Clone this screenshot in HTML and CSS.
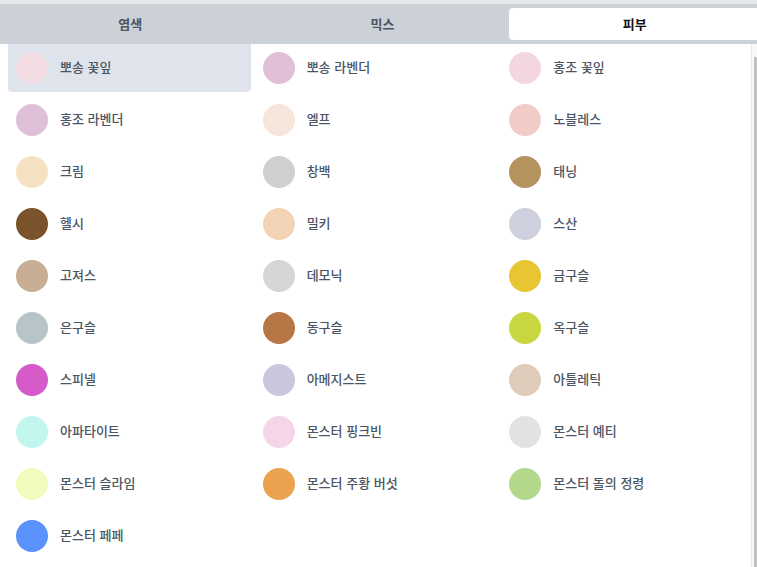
FILE: index.html
```html
<!DOCTYPE html>
<html lang="ko">
<head>
<meta charset="utf-8">
<link rel="stylesheet" href="styles.css">
</head>
<body>
<div class="topstrip"></div>
<div class="tabs">
  <div class="tab">염색</div>
  <div class="tab">믹스</div>
  <div class="tab active">피부</div>
</div>
<div class="content">
  <div class="list">
    <div class="item selected"><span class="dot" style="background:#f3dce3"></span><span class="name">뽀송 꽃잎</span></div>
    <div class="item"><span class="dot" style="background:#e0c0d8"></span><span class="name">뽀송 라벤더</span></div>
    <div class="item"><span class="dot" style="background:#f3d6e0"></span><span class="name">홍조 꽃잎</span></div>

    <div class="item"><span class="dot" style="background:#e0c0d8"></span><span class="name">홍조 라벤더</span></div>
    <div class="item"><span class="dot" style="background:#f6e5db"></span><span class="name">엘프</span></div>
    <div class="item"><span class="dot" style="background:#f1cbc8"></span><span class="name">노블레스</span></div>

    <div class="item"><span class="dot" style="background:#f5e2c3"></span><span class="name">크림</span></div>
    <div class="item"><span class="dot" style="background:#cfcfcf"></span><span class="name">창백</span></div>
    <div class="item"><span class="dot" style="background:#b5935e"></span><span class="name">태닝</span></div>

    <div class="item"><span class="dot" style="background:#7a532a"></span><span class="name">헬시</span></div>
    <div class="item"><span class="dot" style="background:#f3d3b5"></span><span class="name">밀키</span></div>
    <div class="item"><span class="dot" style="background:#cfd0de"></span><span class="name">스산</span></div>

    <div class="item"><span class="dot" style="background:#c6ad94"></span><span class="name">고져스</span></div>
    <div class="item"><span class="dot" style="background:#d6d5d8"></span><span class="name">데모닉</span></div>
    <div class="item"><span class="dot" style="background:#e8c533"></span><span class="name">금구슬</span></div>

    <div class="item"><span class="dot" style="background:#b8c4c7"></span><span class="name">은구슬</span></div>
    <div class="item"><span class="dot" style="background:#b87645"></span><span class="name">동구슬</span></div>
    <div class="item"><span class="dot" style="background:#c8d640"></span><span class="name">옥구슬</span></div>

    <div class="item"><span class="dot" style="background:#d45bc9"></span><span class="name">스피넬</span></div>
    <div class="item"><span class="dot" style="background:#cbc6de"></span><span class="name">아메지스트</span></div>
    <div class="item"><span class="dot" style="background:#dfcbb9"></span><span class="name">아틀레틱</span></div>

    <div class="item"><span class="dot" style="background:#c3f5ef"></span><span class="name">아파타이트</span></div>
    <div class="item"><span class="dot" style="background:#f5d6e9"></span><span class="name">몬스터 핑크빈</span></div>
    <div class="item"><span class="dot" style="background:#e2e2e4"></span><span class="name">몬스터 예티</span></div>

    <div class="item"><span class="dot" style="background:#f2fbbb"></span><span class="name">몬스터 슬라임</span></div>
    <div class="item"><span class="dot" style="background:#eba24e"></span><span class="name">몬스터 주황 버섯</span></div>
    <div class="item"><span class="dot" style="background:#b3d88b"></span><span class="name">몬스터 돌의 정령</span></div>

    <div class="item"><span class="dot" style="background:#5a91fb"></span><span class="name">몬스터 페페</span></div>
  </div>
  <div class="scrollbar"><div class="thumb"></div></div>
</div>
</body>
</html>
```
FILE: styles.css
```css
html, body {
  margin: 0;
  padding: 0;
  overflow: hidden;
  background: #ffffff;
  font-family: "Noto Sans CJK KR", "Noto Sans", sans-serif;
}
body {
  width: 757px;
  height: 567px;
}
.topstrip {
  height: 4px;
  background: #e4e6ea;
}
.tabs {
  width: 765px;
  box-sizing: border-box;
  height: 40px;
  padding: 4px;
  background: #ccd0d7;
  display: grid;
  grid-template-columns: 1fr 1fr 1fr;
}
.tab {
  display: flex;
  align-items: center;
  justify-content: center;
  font-size: 13px;
  font-weight: 700;
  color: #4b5563;
  border-radius: 4px;
  padding-bottom: 2px;
  box-sizing: border-box;
}
.tab.active {
  background: #ffffff;
  color: #111111;
}
.content {
  display: flex;
  height: 523px;
}
.list {
  width: 736px;
  padding: 0 0 0 8px;
  display: grid;
  grid-template-columns: repeat(3, 1fr);
  grid-auto-rows: 48px;
  column-gap: 4px;
  row-gap: 4px;
  align-content: start;
}
.item {
  display: flex;
  align-items: center;
  gap: 12px;
  padding: 0 8px;
  border-radius: 4px;
}
.item.selected {
  background: #dfe3eb;
  border-top-left-radius: 0;
  border-top-right-radius: 0;
}
.dot {
  width: 32px;
  height: 32px;
  border-radius: 50%;
  flex: none;
}
.name {
  font-size: 13px;
  font-weight: 500;
  color: #4b5563;
  line-height: 18px;
  padding-bottom: 3px;
}
.scrollbar {
  margin-left: auto;
  width: 6px;
  border-left: 1px solid #e8e8e8;
  background: #f8f8f8;
  padding-top: 13px;
  box-sizing: border-box;
  display: flex;
  justify-content: flex-end;
}
.thumb {
  width: 3px;
  height: 520px;
  background: #c1c1c1;
}
```
